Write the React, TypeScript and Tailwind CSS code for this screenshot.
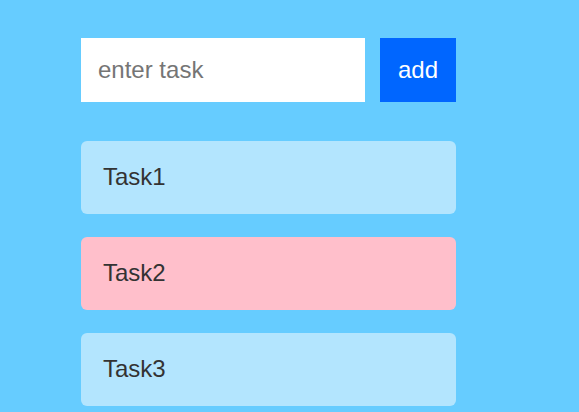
import { useState } from "react";

type Task = { id: number; title: string; done: boolean };

export default function App() {
  const [tasks] = useState<Task[]>([
    { id: 1, title: "Task1", done: false },
    { id: 2, title: "Task2", done: true },
    { id: 3, title: "Task3", done: false },
  ]);

  return (
    <div className="min-h-[412px] bg-[#66ccff] font-['Liberation_Sans',Arial,sans-serif]">
      <div className="ml-[81px] w-[375px] pt-[38px]">
        <div className="flex gap-[15px]">
          <input
            placeholder="enter task"
            className="h-[64px] w-[284px] bg-white px-[17px] text-[24px] text-[#333] placeholder:text-[#757575] outline-none"
          />
          <button className="h-[64px] w-[76px] bg-[#0066ff] text-[24px] text-white">
            add
          </button>
        </div>
        <ul className="mt-[39px] flex flex-col gap-[23.5px]">
          {tasks.map((task) => (
            <li
              key={task.id}
              className={
                "flex h-[72.5px] items-center rounded-[6px] pl-[22px] text-[24px] text-[#333] " +
                (task.done ? "bg-[#ffbfcb]" : "bg-[#b3e5fe]")
              }
            >
              {task.title}
            </li>
          ))}
        </ul>
      </div>
    </div>
  );
}
